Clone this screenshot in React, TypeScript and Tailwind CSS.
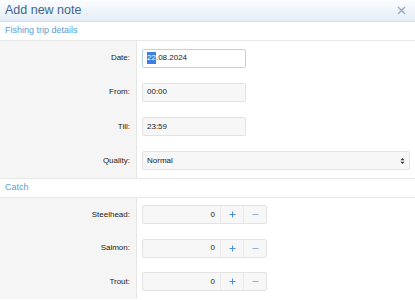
import React from "react";

const font = { fontFamily: '"Liberation Sans", Arial, Helvetica, sans-serif' };

function Row({ label, children, h = "h-[34.25px]" }: { label: string; children: React.ReactNode; h?: string }) {
  return (
    <div className={`flex ${h}`}>
      <div className="w-[137px] shrink-0 bg-[#f5f5f5] border-r border-[#e6e6e6] flex items-center justify-end pr-[6px] text-[8px] text-[#222]">
        {label}
      </div>
      <div className="flex-1 flex items-center pl-[5px] pr-[5px]">{children}</div>
    </div>
  );
}

function Section({ title }: { title: string }) {
  return (
    <div className="h-[19px] border-b border-[#e8e8e8] flex items-center pl-[5px] text-[9px] text-[#5b9bd5] bg-white">
      {title}
    </div>
  );
}

function TextBox({ value }: { value: string }) {
  return (
    <div className="w-[104px] h-[19px] rounded-[2px] border border-[#e3e3e3] bg-[#f7f7f7] flex items-center pl-[4px] text-[8px] text-[#222]">
      {value}
    </div>
  );
}

function Counter() {
  return (
    <div className="w-[125px] h-[19px] rounded-[2px] border border-[#e3e3e3] bg-[#f7f7f7] flex text-[8px]">
      <div className="w-[78px] flex items-center justify-end pr-[5px] text-[#222] border-r border-[#e8e8e8]">0</div>
      <div className="w-[23px] flex items-center justify-center border-r border-[#e8e8e8]">
        <svg width="7" height="7" viewBox="0 0 7 7">
          <path d="M3.5 0.5v6M0.5 3.5h6" stroke="#4a90d9" strokeWidth="1" />
        </svg>
      </div>
      <div className="flex-1 flex items-center justify-center">
        <svg width="7" height="7" viewBox="0 0 7 7">
          <path d="M0.5 3.5h6" stroke="#8fb0cf" strokeWidth="1" />
        </svg>
      </div>
    </div>
  );
}

export default function App() {
  return (
    <div className="w-[415px] h-[300px] overflow-hidden bg-white" style={font}>
      <div className="h-[22px] border-b border-[#d6dee7] bg-gradient-to-b from-[#fbfdff] to-[#e4edf6] flex items-center justify-between pl-[5px] pr-[9px]">
        <span className="text-[12.5px] text-[#3f6690]">Add new note</span>
        <svg width="9" height="9" viewBox="0 0 9 9">
          <path d="M1 1l7 7M8 1l-7 7" stroke="#93aac2" strokeWidth="1.4" />
        </svg>
      </div>
      <Section title="Fishing trip details" />
      <Row label="Date:">
        <div className="w-[104px] h-[19px] rounded-[2px] border border-[#b9d3ee] bg-white flex items-center pl-[4px] text-[8px] text-[#222]">
          <span className="bg-[#3d7fe0] text-white leading-[12px]">22</span>
          <span>.08.2024</span>
        </div>
      </Row>
      <Row label="From:">
        <TextBox value="00:00" />
      </Row>
      <Row label="Till:">
        <TextBox value="23:59" />
      </Row>
      <Row label="Quality:">
        <div className="w-full h-[19px] rounded-[2px] border border-[#e3e3e3] bg-[#f7f7f7] flex items-center justify-between pl-[4px] pr-[4px] text-[8px] text-[#222]">
          <span>Normal</span>
          <svg width="5" height="8" viewBox="0 0 5 8">
            <path d="M0.5 3.2L2.5 1L4.5 3.2Z M0.5 4.8L2.5 7L4.5 4.8Z" fill="#333" />
          </svg>
        </div>
      </Row>
      <div className="border-t border-[#e8e8e8]" />
      <Section title="Catch" />
      <Row label="Steelhead:" h="h-[33.5px]">
        <Counter />
      </Row>
      <Row label="Salmon:" h="h-[33.5px]">
        <Counter />
      </Row>
      <Row label="Trout:" h="h-[33.5px]">
        <Counter />
      </Row>
    </div>
  );
}
